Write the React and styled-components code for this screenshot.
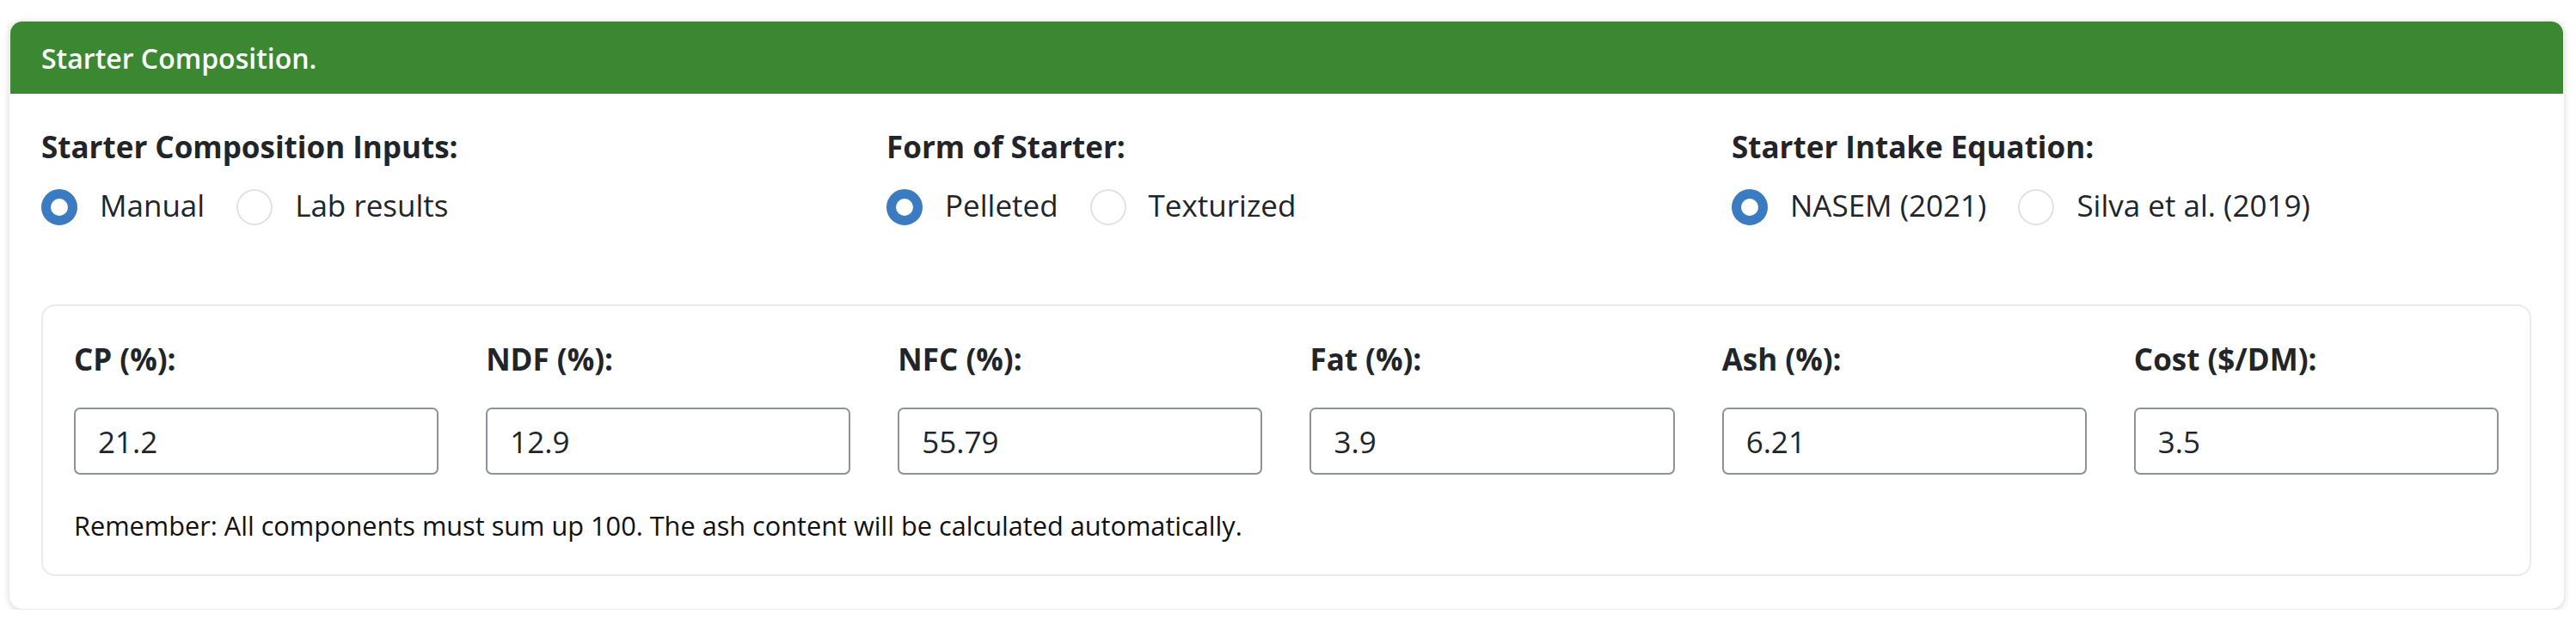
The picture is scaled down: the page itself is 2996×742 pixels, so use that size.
import React, { useState } from 'react';
import styled, { createGlobalStyle } from 'styled-components';

const GlobalStyle = createGlobalStyle`
    body {
        margin: 0;
        background: #ffffff;
        font-family: 'Open Sans', 'Noto Sans', sans-serif;
        color: #212529;
    }
`;

const Page = styled.div`
    padding: 23px 13px 0 10px;
`;

const Card = styled.div`
    background: #ffffff;
    border: 1px solid #ececec;
    border-radius: 16px;
    box-shadow: 0 2px 7px rgba(0, 0, 0, 0.14);
`;

const Header = styled.div`
    display: flex;
    align-items: center;
    height: 84px;
    margin: 1px 1px 0 1px;
    padding-left: 36px;
    background: #3c8832;
    border-radius: 14px 14px 0 0;
    color: #ffffff;
    font-size: 32px;
    font-weight: 600;
`;

const Body = styled.div`
    padding: 38px 38px 38px 37px;
`;

const Options = styled.div`
    display: grid;
    grid-template-columns: repeat(3, 1fr);
    column-gap: 53px;
`;

const Label = styled.div`
    font-size: 35px;
    font-weight: 700;
    line-height: 48px;
    color: #212529;
`;

const RadioRow = styled.div`
    display: flex;
    align-items: center;
    margin-top: 20px;
`;

const RadioItem = styled.label`
    display: flex;
    align-items: center;
    gap: 26px;
    margin-right: 37px;
    font-size: 35px;
    line-height: 48px;
    cursor: pointer;
`;

const RadioDot = styled.span`
    box-sizing: border-box;
    flex: none;
    width: 42px;
    height: 42px;
    margin-top: 4px;
    border-radius: 50%;
    border: ${(p) => (p.$checked ? '11.5px solid #3a7bc1' : '2px solid #dfe2e6')};
    background: #ffffff;
`;

const Inner = styled.div`
    margin-top: 91px;
    padding: 38px 36px 34px 36px;
    border: 2px solid #ebebeb;
    border-radius: 16px;
`;

const Fields = styled.div`
    display: grid;
    grid-template-columns: repeat(6, 1fr);
    column-gap: 55px;
`;

const Input = styled.input`
    box-sizing: border-box;
    display: block;
    width: 100%;
    height: 78px;
    margin-top: 32px;
    padding: 0 20px 0 26px;
    border: 2px solid #8e929a;
    border-radius: 7px;
    font-family: 'Open Sans', 'Noto Sans', sans-serif;
    font-size: 35px;
    color: #212529;
    outline: none;
`;

const Note = styled.p`
    margin: 37px 0 0 0;
    font-size: 30.7px;
    line-height: 45px;
    color: #111111;
`;

const groups = [
    { title: 'Starter Composition Inputs:', options: ['Manual', 'Lab results'] },
    { title: 'Form of Starter:', options: ['Pelleted', 'Texturized'] },
    { title: 'Starter Intake Equation:', options: ['NASEM (2021)', 'Silva et al. (2019)'] },
];

const fields = [
    { label: 'CP (%):', value: '21.2' },
    { label: 'NDF (%):', value: '12.9' },
    { label: 'NFC (%):', value: '55.79' },
    { label: 'Fat (%):', value: '3.9' },
    { label: 'Ash (%):', value: '6.21' },
    { label: 'Cost ($/DM):', value: '3.5' },
];

const RadioGroup = ({ group }) => {
    const [selected, setSelected] = useState(0);
    return (
        <div>
            <Label>{group.title}</Label>
            <RadioRow>
                {group.options.map((opt, i) => (
                    <RadioItem key={opt} onClick={() => setSelected(i)}>
                        <RadioDot $checked={selected === i} />
                        {opt}
                    </RadioItem>
                ))}
            </RadioRow>
        </div>
    );
};

export default function App() {
    return (
        <Page>
            <GlobalStyle />
            <Card>
                <Header>Starter Composition.</Header>
                <Body>
                    <Options>
                        {groups.map((g) => (
                            <RadioGroup group={g} key={g.title} />
                        ))}
                    </Options>
                    <Inner>
                        <Fields>
                            {fields.map((f) => (
                                <div key={f.label}>
                                    <Label>{f.label}</Label>
                                    <Input defaultValue={f.value} />
                                </div>
                            ))}
                        </Fields>
                        <Note>
                            Remember: All components must sum up 100. The ash content will be
                            calculated automatically.
                        </Note>
                    </Inner>
                </Body>
            </Card>
        </Page>
    );
}
